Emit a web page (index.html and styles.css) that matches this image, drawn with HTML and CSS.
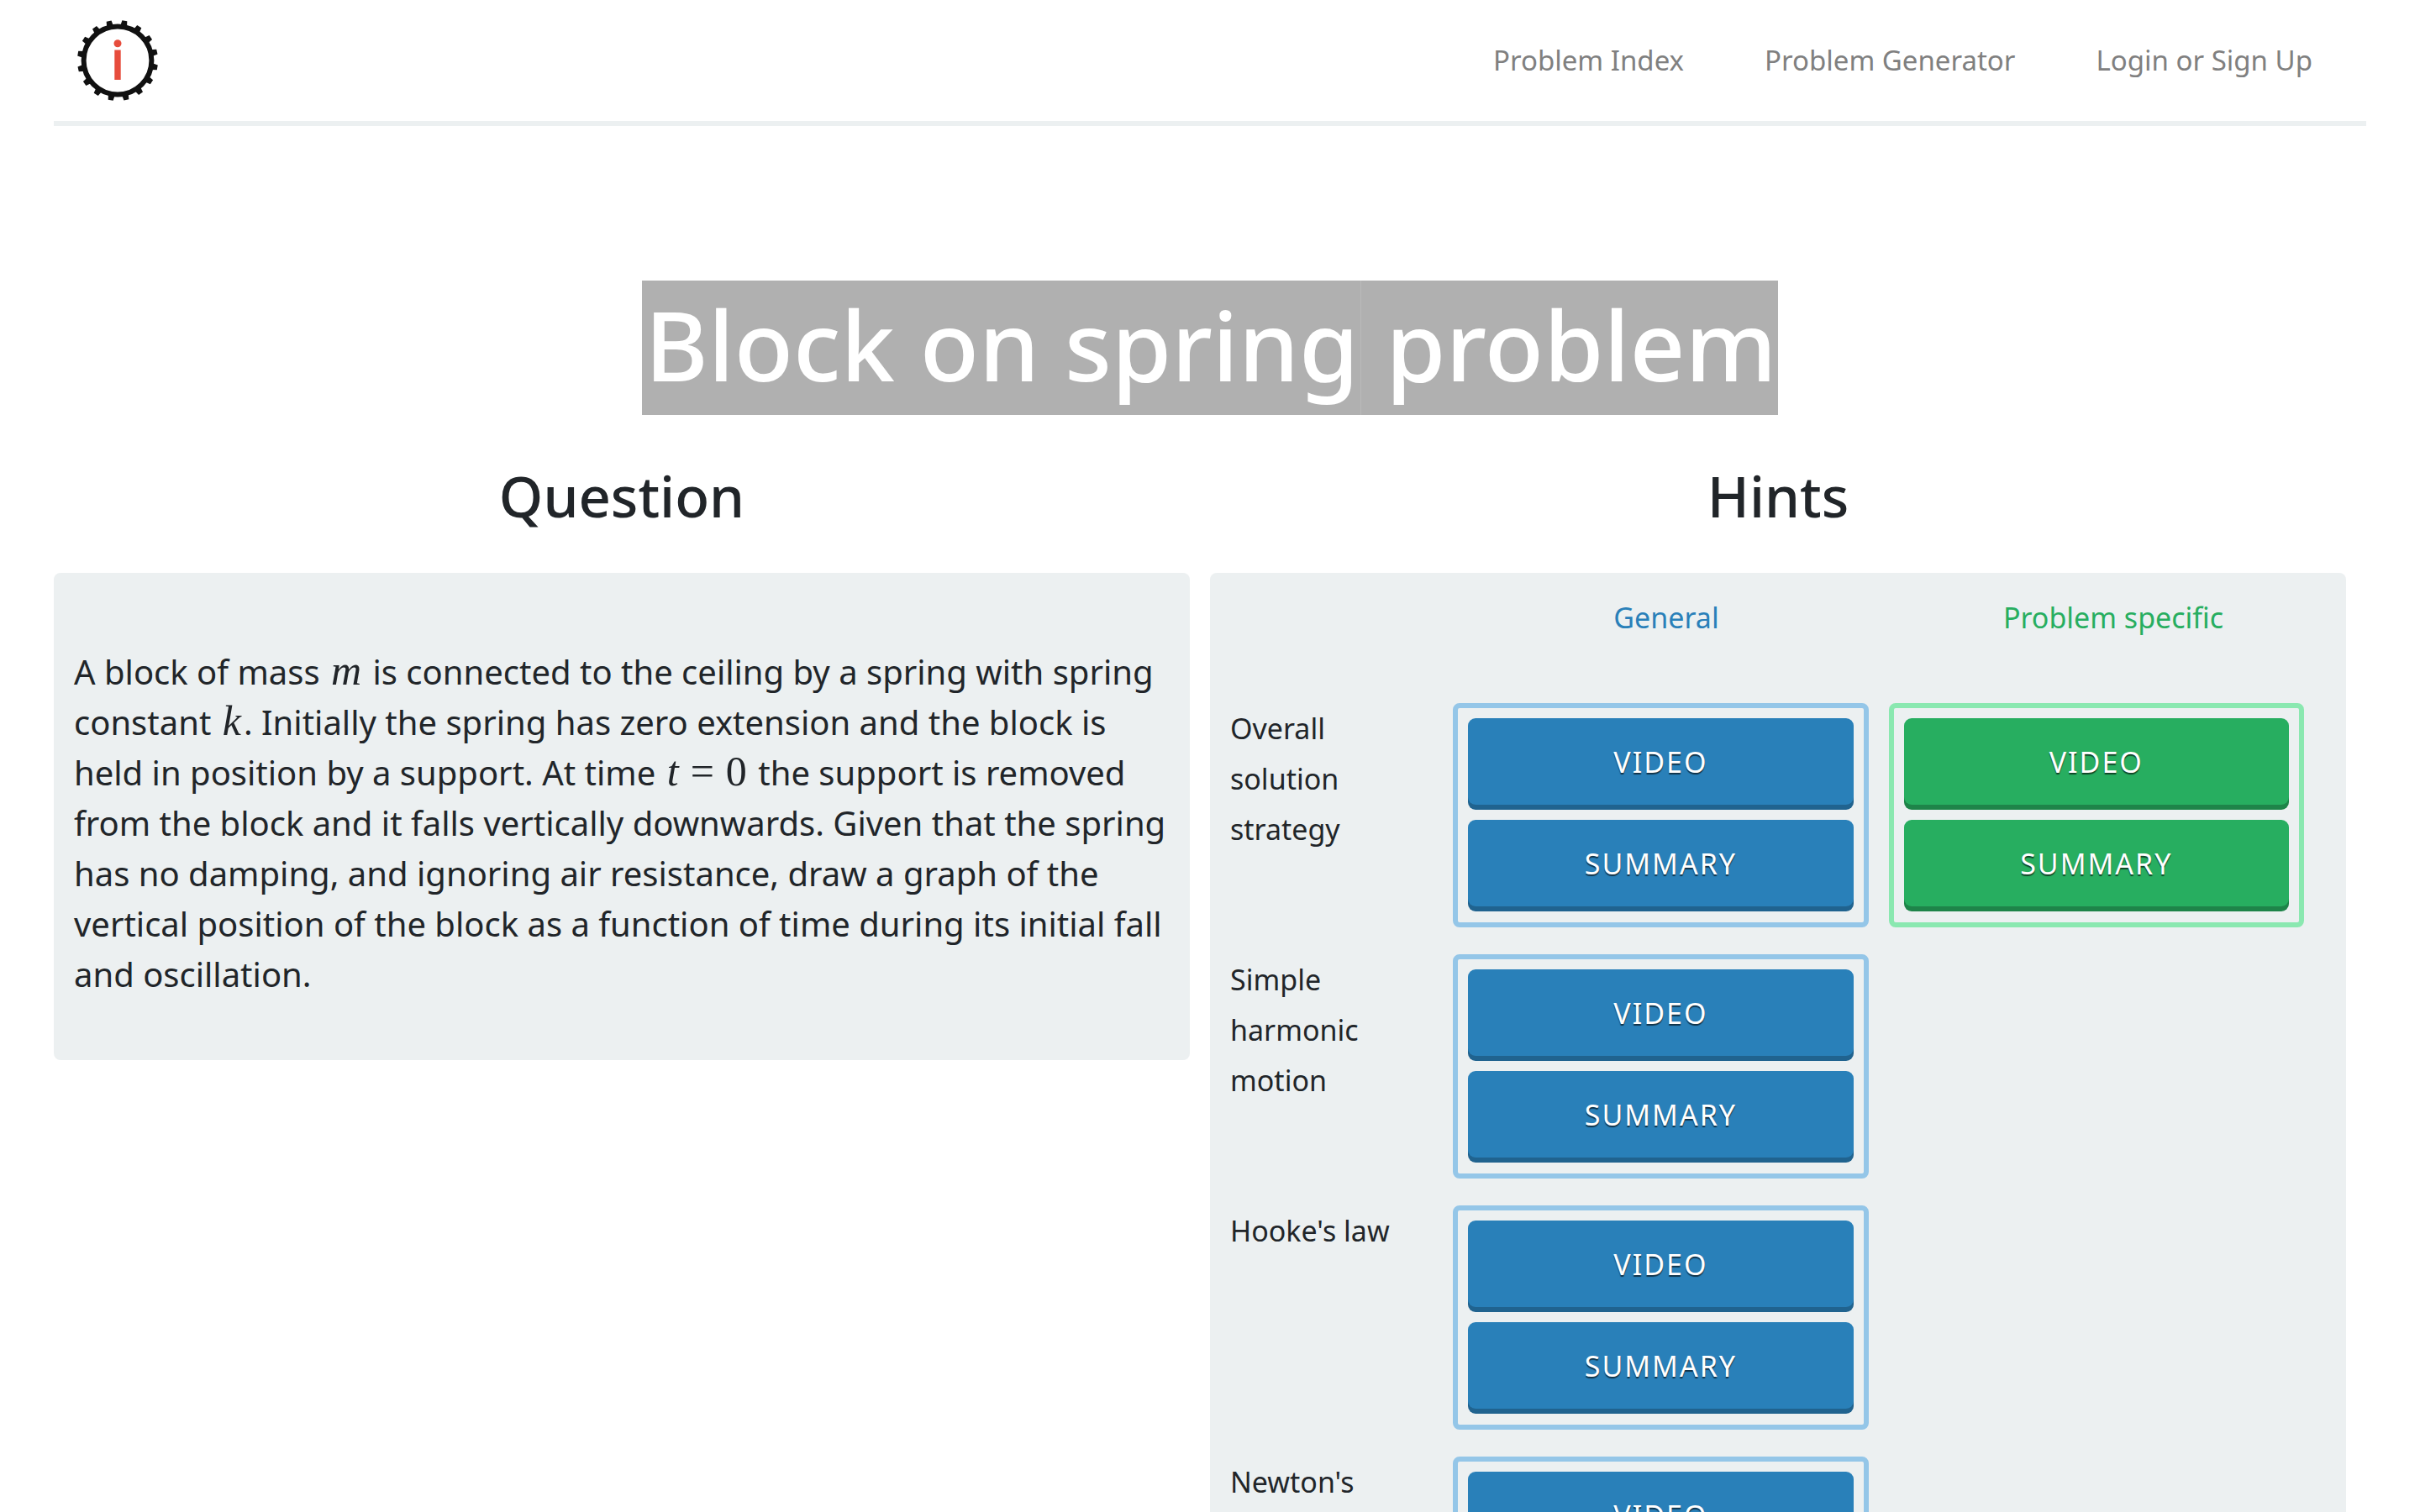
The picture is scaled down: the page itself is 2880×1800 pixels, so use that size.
FILE: index.html
```html
<!DOCTYPE html>
<html lang="en">
<head>
<meta charset="utf-8">
<title>Block on spring problem</title>
<link rel="stylesheet" href="styles.css">
</head>
<body>
<header class="site-header">
  <a class="logo" href="#" aria-label="Home">
    <svg viewBox="0 0 96 96" width="96" height="96" aria-hidden="true">
      <defs><path id="tooth" d="M43.800 8L45 0h6l1.200 8z"/></defs>
      <g fill="#111" transform="rotate(10 48 48)">
        <use href="#tooth"/>
        <use href="#tooth" transform="rotate(22.500 48 48)"/>
        <use href="#tooth" transform="rotate(45 48 48)"/>
        <use href="#tooth" transform="rotate(67.500 48 48)"/>
        <use href="#tooth" transform="rotate(90 48 48)"/>
        <use href="#tooth" transform="rotate(112.500 48 48)"/>
        <use href="#tooth" transform="rotate(135 48 48)"/>
        <use href="#tooth" transform="rotate(157.500 48 48)"/>
        <use href="#tooth" transform="rotate(180 48 48)"/>
        <use href="#tooth" transform="rotate(202.500 48 48)"/>
        <use href="#tooth" transform="rotate(225 48 48)"/>
        <use href="#tooth" transform="rotate(247.500 48 48)"/>
        <use href="#tooth" transform="rotate(270 48 48)"/>
        <use href="#tooth" transform="rotate(292.500 48 48)"/>
        <use href="#tooth" transform="rotate(315 48 48)"/>
        <use href="#tooth" transform="rotate(337.500 48 48)"/>
      </g>
      <circle cx="48" cy="48" r="40.400" fill="none" stroke="#111" stroke-width="6"/>
      <circle cx="48" cy="27.700" r="4.500" fill="#e74c3c"/>
      <rect x="44.300" y="35.500" width="7.400" height="35.500" fill="#e74c3c"/>
    </svg>
  </a>
  <nav class="site-nav">
    <a href="#">Problem Index</a>
    <a href="#">Problem Generator</a>
    <a href="#">Login or Sign Up</a>
  </nav>
</header>
<main>
  <h1 class="page-title"><span class="selected">Block on spring</span><span class="selected"> problem</span></h1>
  <div class="columns">
    <section>
      <h2 class="section-title">Question</h2>
      <div class="panel question">
        <p>A block of mass <i class="math">m</i> is connected to the ceiling by a spring with spring constant <i class="math">k</i>. Initially the spring has zero extension and the block is held in position by a support. At time <span class="math"><i>t</i><span class="relation">=</span>0</span> the support is removed from the block and it falls vertically downwards. Given that the spring has no damping, and ignoring air resistance, draw a graph of the vertical position of the block as a function of time during its initial fall and oscillation.</p>
      </div>
    </section>
    <section>
      <h2 class="section-title">Hints</h2>
      <div class="panel hints">
        <div class="hint-head">
          <span class="general">General</span>
          <span class="specific">Problem specific</span>
        </div>
        <div class="hint-row">
          <h3 class="hint-label">Overall solution strategy</h3>
          <div class="hint-box blue"><button type="button">VIDEO</button><button type="button">SUMMARY</button></div>
          <div class="hint-box green"><button type="button">VIDEO</button><button type="button">SUMMARY</button></div>
        </div>
        <div class="hint-row">
          <h3 class="hint-label">Simple harmonic motion</h3>
          <div class="hint-box blue"><button type="button">VIDEO</button><button type="button">SUMMARY</button></div>
        </div>
        <div class="hint-row">
          <h3 class="hint-label">Hooke's law</h3>
          <div class="hint-box blue"><button type="button">VIDEO</button><button type="button">SUMMARY</button></div>
        </div>
        <div class="hint-row">
          <h3 class="hint-label">Newton's</h3>
          <div class="hint-box blue"><button type="button">VIDEO</button><button type="button">SUMMARY</button></div>
        </div>
      </div>
    </section>
  </div>
</main>
</body>
</html>
```
FILE: styles.css
```css
* {
  box-sizing: border-box;
}

body {
  margin: 0;
  padding: 0 64px;
  background: #fff;
  color: #212529;
  font-family: "Noto Sans", sans-serif;
  font-size: 34px;
  line-height: 60px;
}

h1, h2, h3, p {
  margin: 0;
}

.site-header {
  display: flex;
  align-items: center;
  justify-content: space-between;
  padding: 24px 64px 24px 28px;
  border-bottom: 6px solid #ecf0f1;
}

.logo svg {
  display: block;
}

.site-nav {
  display: flex;
  gap: 96px;
  font-size: 33px;
}

.site-nav a {
  color: #808080;
  text-decoration: none;
}

.page-title {
  display: flex;
  justify-content: center;
  margin-top: 184px;
  font-size: 115px;
  font-weight: 500;
  line-height: 152px;
  white-space: pre;
}

.selected {
  padding: 0 2px 8px 4px;
  background: #b0b0b0;
  color: #fff;
}

.selected + .selected {
  padding-left: 0;
  box-shadow: inset 1px 0 #bababa;
}

.columns {
  display: grid;
  grid-template-columns: 1fr 1fr;
  align-items: start;
  margin-top: 56px;
}

.columns > section {
  padding-right: 24px;
}

.section-title {
  margin-bottom: 52px;
  font-size: 67px;
  font-weight: 500;
  line-height: 80px;
  text-align: center;
}

.panel {
  border-radius: 8px;
  background: #ecf0f1;
}

.question {
  padding: 88px 16px 72px 24px;
  font-size: 40px;
}

.math {
  padding: 0 3px;
  font-family: "Liberation Serif", serif;
  font-size: 50px;
  line-height: 50px;
  white-space: nowrap;
}

.relation {
  padding: 0 14px;
}

.hints {
  padding: 23px 0 32px;
}

.hint-head {
  display: grid;
  grid-template-columns: 1fr 2fr 2fr;
  margin: 0 11px 72px;
  text-align: center;
}

.general {
  grid-column: 2;
  color: #2980b9;
}

.specific {
  color: #27ae60;
}

.hint-row {
  display: grid;
  grid-template-columns: 1fr 2fr 2fr;
  align-items: start;
  margin: 0 38px 32px 18px;
}

.hint-label {
  padding: 0 12px 0 6px;
  font-size: 34px;
  font-weight: 400;
}

.hint-box {
  display: grid;
  gap: 18px;
  margin: 0 12px;
  padding: 12px 12px 19px;
  border: 6px solid;
  border-radius: 8px;
}

.hint-box button {
  height: 103px;
  border: 0;
  border-radius: 9px;
  color: #fff;
  font: inherit;
  letter-spacing: 2px;
  text-shadow: 0 2px 1px rgba(0, 0, 0, 0.6);
}

.blue {
  border-color: #94c6e8;
}

.blue button {
  background: #2980b9;
  box-shadow: 0 6px 0 #20638f;
}

.green {
  border-color: #8ae8b0;
}

.green button {
  background: #27ae60;
  box-shadow: 0 6px 0 #1e8449;
}
```
